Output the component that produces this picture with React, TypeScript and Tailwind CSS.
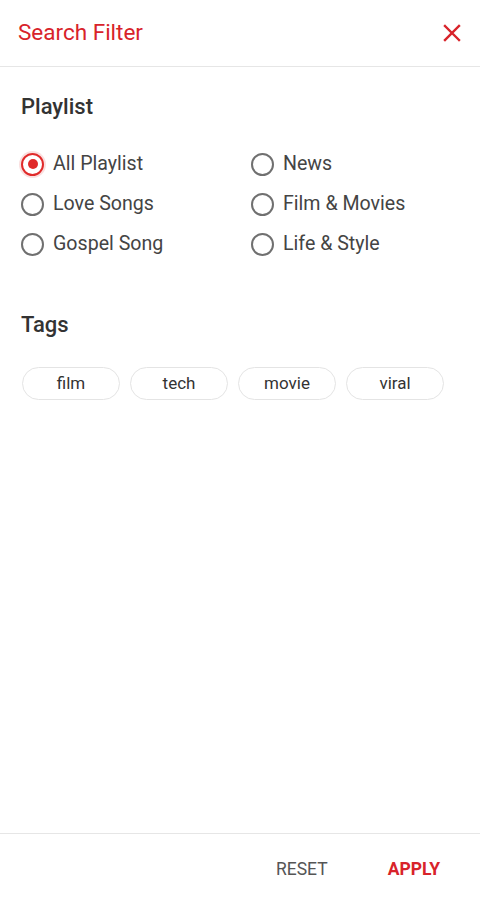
import { useState } from 'react';

const playlists = [
  ['All Playlist', 'News'],
  ['Love Songs', 'Film & Movies'],
  ['Gospel Song', 'Life & Style'],
];

const tags = ['film', 'tech', 'movie', 'viral'];

function Radio({ label, checked, onSelect }: { label: string; checked: boolean; onSelect: () => void }) {
  return (
    <button onClick={onSelect} className="flex items-center h-10 text-left">
      {checked ? (
        <span className="w-[23px] h-[23px] rounded-full border-[2.5px] border-[#e02a2a] flex items-center justify-center shadow-[0_0_0_2px_rgba(224,42,42,0.15)]">
          <span className="w-[10px] h-[10px] rounded-full bg-[#e02a2a]" />
        </span>
      ) : (
        <span className="w-[23px] h-[23px] rounded-full border-[2.5px] border-[#707070]" />
      )}
      <span className="ml-[9px] text-[19.6px] text-[#444]">{label}</span>
    </button>
  );
}

export default function App() {
  const [selected, setSelected] = useState('All Playlist');

  return (
    <div className="h-[897px] w-[480px] flex flex-col bg-white font-['Roboto',sans-serif]">
      {/* header */}
      <div className="h-[67px] flex items-center justify-between pl-[18px] pr-[19px] border-b border-[#e6e6e6]">
        <h1 className="text-[22.5px] text-[#d8232a]">Search Filter</h1>
        <button className="w-[18px] h-[18px] flex items-center justify-center">
          <svg width="18" height="18" viewBox="0 0 18 18" fill="none" stroke="#d8232a" strokeWidth="2.4" strokeLinecap="square">
            <path d="M2 2 L16 16 M16 2 L2 16" />
          </svg>
        </button>
      </div>

      <div className="flex-1 px-[21px] pt-[26px]">
        <h2 className="text-[22px] leading-7 font-medium text-[#333]">Playlist</h2>
        <div className="grid grid-cols-[230px_1fr] mt-[23px]">
          {playlists.flat().map(p => (
            <Radio key={p} label={p} checked={selected === p} onSelect={() => setSelected(p)} />
          ))}
        </div>

        <h2 className="text-[22px] leading-7 font-medium text-[#333] mt-[47px]">Tags</h2>
        <div className="flex gap-[10px] mt-[28px] pl-px">
          {tags.map(t => (
            <span key={t} className="w-[98px] h-[33px] rounded-full border border-[#e4e4e4] flex items-center justify-center text-[17px] text-[#333]">
              {t}
            </span>
          ))}
        </div>
      </div>

      {/* footer */}
      <div className="h-[64px] border-t border-[#e6e6e6] flex items-center justify-end pt-2 pr-[40px] gap-[60px]">
        <button className="text-[17.5px] text-[#555]">RESET</button>
        <button className="text-[17.5px] font-bold text-[#d8232a]">APPLY</button>
      </div>
    </div>
  );
}
